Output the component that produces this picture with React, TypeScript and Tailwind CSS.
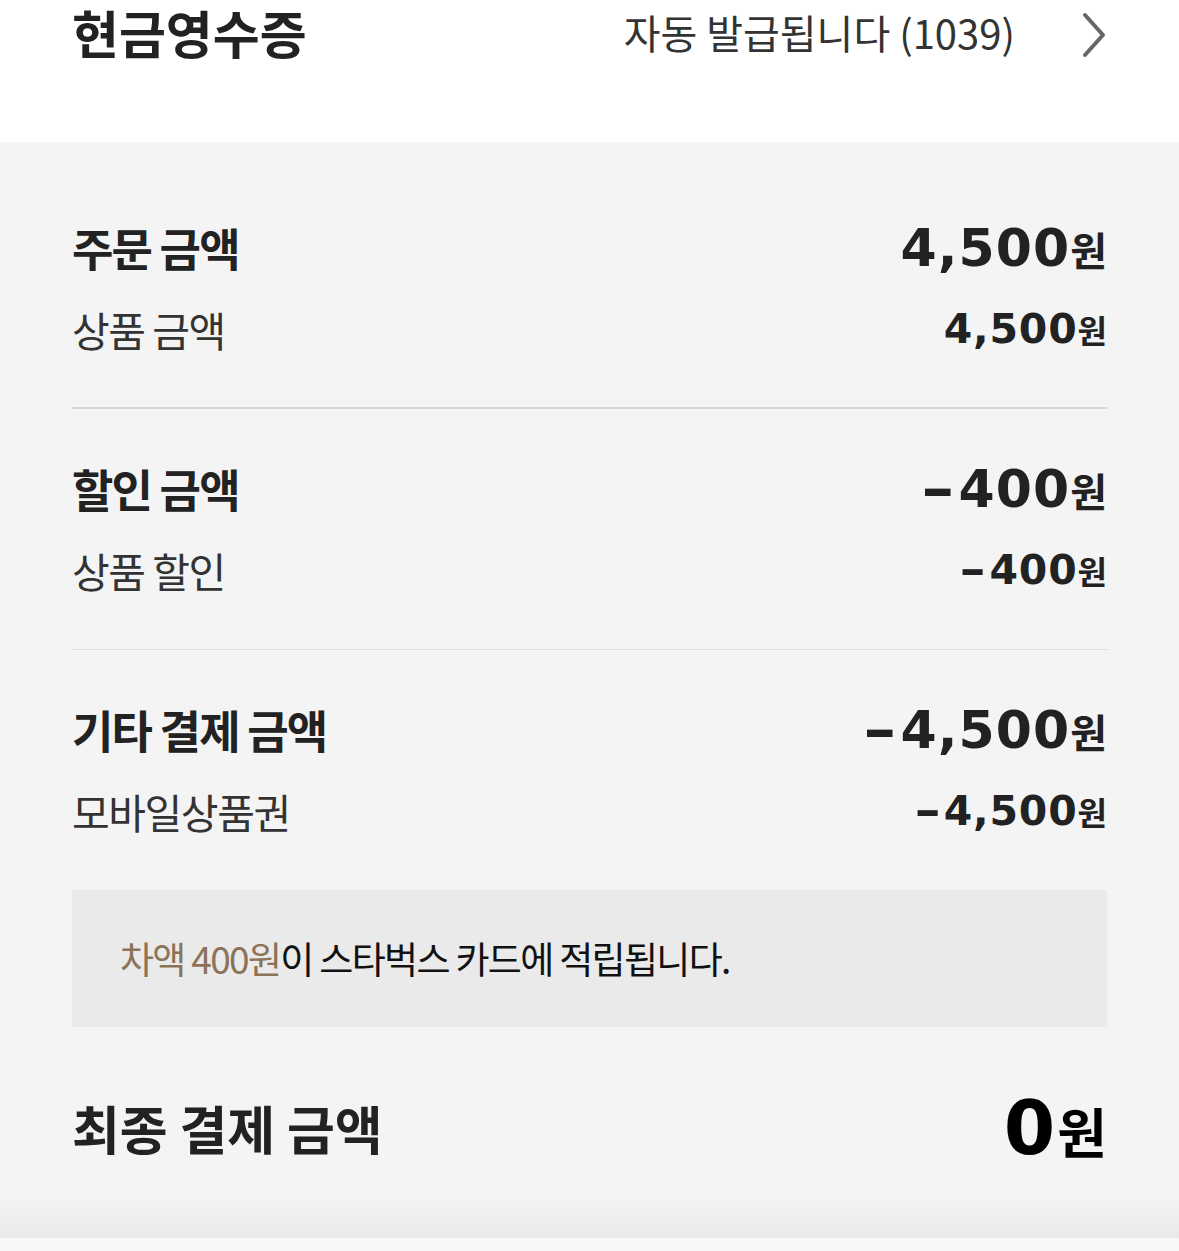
import { ReactNode } from 'react';

const KR = "font-['Noto_Sans_CJK_KR','Noto_Sans',sans-serif]";
const NUM = "font-['DejaVu_Sans','Noto_Sans_CJK_KR',sans-serif]";

function Amount({ value, big }: { value: string; big?: boolean }) {
  const negative = value.startsWith('-');
  const digits = negative ? value.slice(1) : value;
  return (
    <div className={`flex items-baseline font-bold text-[#222] ${NUM} ${big ? 'text-[52px]' : 'text-[41px]'}`}>
      {negative && (
        <span className={`inline-block scale-x-[1.6] ${big ? 'mr-[10px]' : 'mr-[8px]'}`}>-</span>
      )}
      <span className="tracking-[0.02em]">{digits}</span>
      <span className={`${KR} ${big ? 'text-[40px]' : 'text-[32px]'}`}>원</span>
    </div>
  );
}

function Section({
  title,
  total,
  sub,
  subAmount,
  first,
  children,
}: {
  title: string;
  total: string;
  sub: string;
  subAmount: string;
  first?: boolean;
  children?: ReactNode;
}) {
  return (
    <div className={first ? 'pt-[66px]' : 'pt-[40px]'}>
      <div className="h-[80px] flex items-center justify-between">
        <span className={`${KR} text-[45px] font-bold tracking-[-0.04em] text-[#222]`}>{title}</span>
        <Amount value={total} big />
      </div>
      <div className="mt-[2px] h-[80px] flex items-center justify-between">
        <span className={`${KR} text-[41px] tracking-[-0.035em] text-[#333]`}>{sub}</span>
        <Amount value={subAmount} />
      </div>
      {children}
    </div>
  );
}

export default function App() {
  return (
    <div className="w-[1179px] h-[1251px] overflow-hidden bg-[#f4f4f4] flex flex-col">
      {/* Receipt header */}
      <div className="h-[142px] bg-white px-[72px] shrink-0">
        <div className="h-[64px] flex items-center justify-between">
          <span className={`${KR} text-[51px] leading-none font-bold text-[#222]`}>현금영수증</span>
          <div className="flex items-center">
            <span className={`${KR} text-[40px] leading-none text-[#333]`}>자동 발급됩니다 (1039)</span>
            <svg className="ml-[66px] mt-[6px]" width="26" height="48" viewBox="0 0 26 48" fill="none">
              <polyline points="4,4 22,24 4,44" stroke="#666" strokeWidth="4" strokeLinecap="round" strokeLinejoin="round" />
            </svg>
          </div>
        </div>
      </div>

      {/* Payment summary */}
      <div className="flex-1 px-[72px] flex flex-col">
        <Section first title="주문 금액" total="4,500" sub="상품 금액" subAmount="4,500">
          <div className="mt-[37px] h-[2px] bg-[#d6d6d6]" />
        </Section>
        <Section title="할인 금액" total="-400" sub="상품 할인" subAmount="-400">
          <div className="mt-[38px] h-[1px] bg-[#dcdcdc]" />
        </Section>
        <Section title="기타 결제 금액" total="-4,500" sub="모바일상품권" subAmount="-4,500" />

        <div className="mt-[38px] h-[137px] bg-[#eaeaea] px-[48px] flex items-center">
          <span className={`${KR} text-[37px] tracking-[-0.045em] text-[#111]`}>
            <span className="text-[#8c7358]">차액 400원</span>이 스타벅스 카드에 적립됩니다.
          </span>
        </div>

        <div className="mt-[61px] h-[80px] flex items-center justify-between">
          <span className={`${KR} text-[52px] font-bold text-[#222]`}>최종 결제 금액</span>
          <div className={`flex items-baseline font-bold text-black ${NUM}`}>
            <span className="text-[74px] mr-[2px]">0</span>
            <span className={`${KR} text-[54px]`}>원</span>
          </div>
        </div>
      </div>

      {/* Bottom shadow */}
      <div className="h-[45px] shrink-0 bg-gradient-to-b from-[#f4f4f4] to-[#e9e9e9]" />
      <div className="h-[13px] shrink-0 bg-[#f7f7f7]" />
    </div>
  );
}
